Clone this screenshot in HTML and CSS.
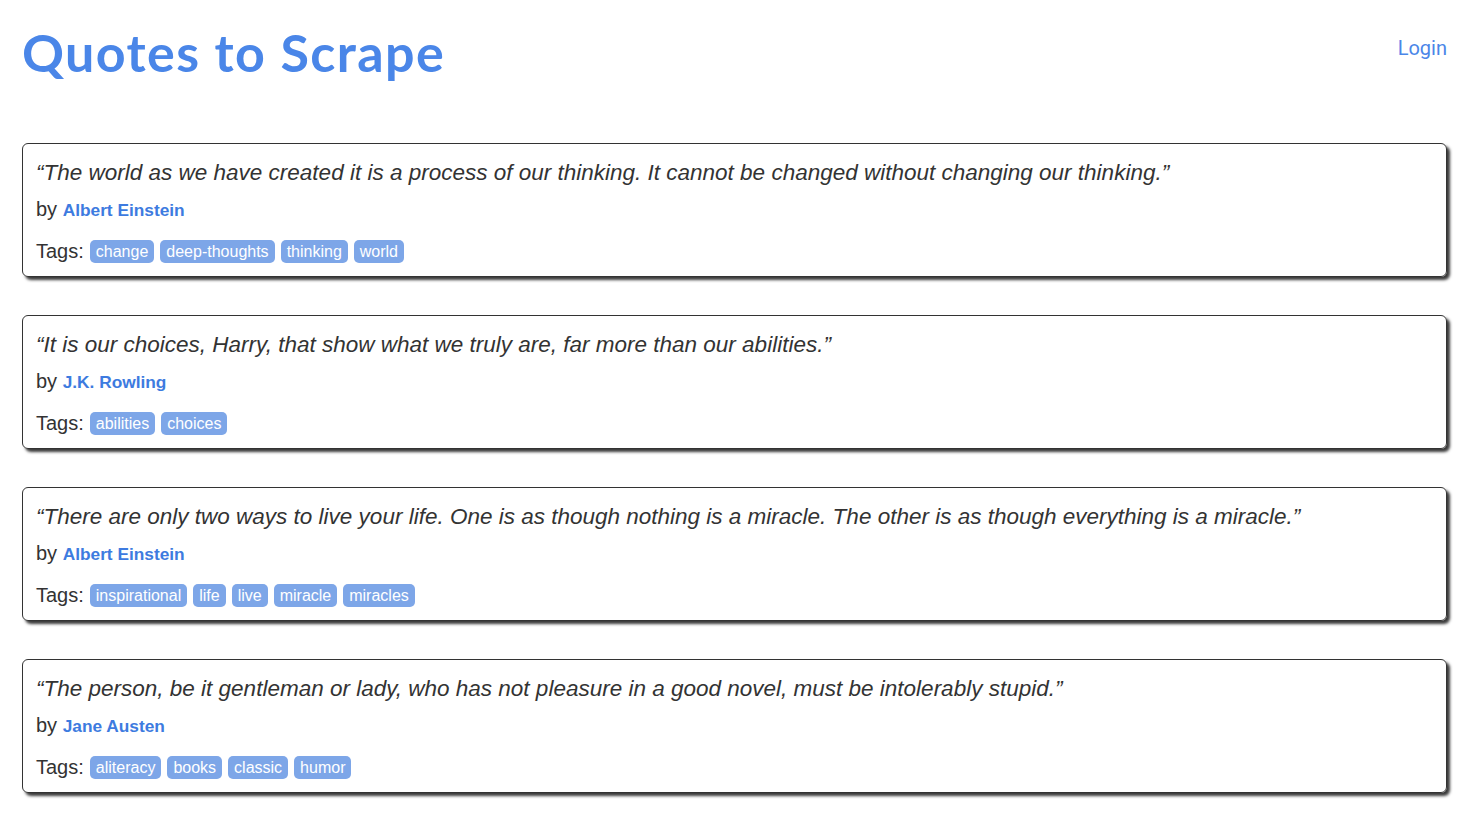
FILE: index.html
```html
<!DOCTYPE html>
<html>
<head>
<meta charset="utf-8">
<link rel="stylesheet" href="styles.css">
</head>
<body>
<header class="header">
  <h1 class="title">Quotes to Scrape</h1>
  <a class="login" href="#">Login</a>
</header>
<main class="quotes">
  <div class="quote">
    <p class="text">“The world as we have created it is a process of our thinking. It cannot be changed without changing our thinking.”</p>
    <p class="by">by <span class="author">Albert Einstein</span></p>
    <div class="tags">Tags: <span class="tag">change</span><span class="tag">deep-thoughts</span><span class="tag">thinking</span><span class="tag">world</span></div>
  </div>
  <div class="quote">
    <p class="text">“It is our choices, Harry, that show what we truly are, far more than our abilities.”</p>
    <p class="by">by <span class="author">J.K. Rowling</span></p>
    <div class="tags">Tags: <span class="tag">abilities</span><span class="tag">choices</span></div>
  </div>
  <div class="quote">
    <p class="text">“There are only two ways to live your life. One is as though nothing is a miracle. The other is as though everything is a miracle.”</p>
    <p class="by">by <span class="author">Albert Einstein</span></p>
    <div class="tags">Tags: <span class="tag">inspirational</span><span class="tag">life</span><span class="tag">live</span><span class="tag">miracle</span><span class="tag">miracles</span></div>
  </div>
  <div class="quote">
    <p class="text">“The person, be it gentleman or lady, who has not pleasure in a good novel, must be intolerably stupid.”</p>
    <p class="by">by <span class="author">Jane Austen</span></p>
    <div class="tags">Tags: <span class="tag">aliteracy</span><span class="tag">books</span><span class="tag">classic</span><span class="tag">humor</span></div>
  </div>
</main>
</body>
</html>
```
FILE: styles.css
```css
html, body { margin: 0; padding: 0; background: #fff; }
body {
  font-family: "Liberation Sans", Arial, sans-serif;
  color: #333;
  padding: 0 30px 20px 22px;
}
.header {
  display: flex;
  justify-content: space-between;
  align-items: flex-start;
  height: 143px;
}
.title {
  margin: 24px 0 0 0;
  font-family: Lato, "Open Sans", sans-serif;
  font-weight: 700;
  font-size: 52px;
  line-height: 56px;
  color: #4a86e8;
  letter-spacing: 1.4px;
}
.login {
  margin-top: 36px;
  font-family: Roboto, "Liberation Sans", sans-serif;
  font-size: 20px;
  line-height: 24px;
  color: #4a86e8;
  text-decoration: none;
}
.quotes {
  display: flex;
  flex-direction: column;
  gap: 38px;
}
.quote {
  border: 1px solid #333;
  border-radius: 6px;
  box-shadow: 3px 3px 3px #3a3a3a;
  padding: 15px 13px 11px 13px;
  height: 106px;
}
.text {
  margin: 0;
  font-style: italic;
  font-size: 22.5px;
  line-height: 28px;
  color: #333;
}
.by {
  margin: 11px 0 0 0;
  font-size: 20px;
  line-height: 22px;
}
.author {
  color: #3d7be0;
  font-weight: 700;
  font-size: 17.3px;
}
.tags {
  margin-top: 18px;
  font-size: 20px;
  line-height: 24px;
  display: flex;
  align-items: center;
}
.tag {
  background: #7da6e8;
  color: #fff;
  font-size: 16px;
  line-height: 23px;
  padding: 0 6px;
  border-radius: 5px;
  margin-right: 6px;
}
.tags .tag:first-child { margin-left: 6px; }
```
